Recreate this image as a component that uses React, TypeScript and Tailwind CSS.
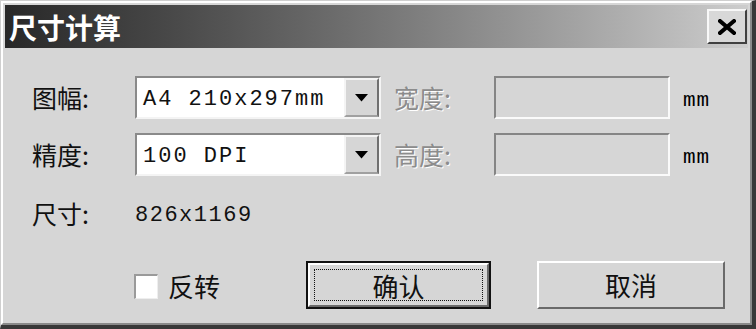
import React from "react";

const cjk = { fontFamily: '"Noto Sans CJK SC", "Noto Sans", sans-serif' };
const mono = { fontFamily: '"Liberation Mono", "DejaVu Sans Mono", monospace' };

function Combo({ value }: { value: string }) {
  return (
    <div className="w-[246px] h-[43px] flex border-t-2 border-l-2 border-t-[#8a8a8a] border-l-[#8a8a8a] border-r-2 border-b-2 border-r-[#f4f4f4] border-b-[#f4f4f4] bg-white">
      <div className="flex-1 flex items-center pl-[6px] pt-[4px] text-[22px] tracking-[2px] text-[#111]" style={mono}>
        {value}
      </div>
      <div className="w-[35px] h-full bg-[#d6d6d6] border-t-2 border-l-2 border-t-[#f4f4f4] border-l-[#f4f4f4] border-r-2 border-b-2 border-r-[#707070] border-b-[#a0a0a0] flex items-center justify-center">
        <svg width="13" height="8" viewBox="0 0 13 8">
          <polygon points="0,0 13,0 6.5,7.5" fill="#000" />
        </svg>
      </div>
    </div>
  );
}

function Field() {
  return (
    <div className="w-[176px] h-[43px] border-t-2 border-l-2 border-t-[#858585] border-l-[#858585] border-r-2 border-b-2 border-r-[#fafafa] border-b-[#fafafa] bg-[#d6d6d6]" />
  );
}

function DisabledLabel({ text }: { text: string }) {
  return (
    <div className="w-[102px] pl-[2px] text-[25px] text-[#8c8c8c] [text-shadow:1px_1px_0_#ffffff]" style={cjk}>
      {text}
    </div>
  );
}

export default function App() {
  return (
    <div className="w-[756px] h-[329px] border-t border-l border-t-[#cfcfcf] border-l-[#cfcfcf] border-r-4 border-b-4 border-r-[#383838] border-b-[#383838] overflow-hidden">
      <div className="w-full h-full border-t-2 border-l-2 border-t-white border-l-white border-r-2 border-b-2 border-r-[#8a8a8a] border-b-[#8a8a8a] bg-[#d6d6d6] pt-[2px] pl-[2px] pr-[2px] flex flex-col">
        {/* Title bar */}
        <div className="h-[43px] flex items-center justify-between bg-linear-to-r from-[#282828] to-[#cdcdcd] pl-[4px] pr-[1px]">
          <div className="text-[28px] font-bold text-white leading-none" style={cjk}>
            尺寸计算
          </div>
          <div className="w-[40px] h-[35px] bg-[#d8d8d8] border-t-2 border-l-2 border-t-[#f8f8f8] border-l-[#f8f8f8] border-r-2 border-b-2 border-r-[#404040] border-b-[#404040] flex items-center justify-center">
            <svg width="18" height="16" viewBox="0 0 18 16">
              <path d="M2 2 L16 14 M16 2 L2 14" stroke="#000" strokeWidth="4" strokeLinecap="square" />
            </svg>
          </div>
        </div>

        {/* Body */}
        <div className="flex flex-col pl-[27px] text-[#111]">
          <div className="mt-[28px] h-[43px] flex items-center">
            <div className="w-[103px] text-[25px]" style={cjk}>图幅:</div>
            <Combo value="A4 210x297mm" />
            <div className="ml-[11px]">
              <DisabledLabel text="宽度:" />
            </div>
            <Field />
            <div className="ml-[13px] pt-[6px] text-[21px] tracking-[1px] text-black" style={mono}>mm</div>
          </div>

          <div className="mt-[14px] h-[43px] flex items-center">
            <div className="w-[103px] text-[25px]" style={cjk}>精度:</div>
            <Combo value="100 DPI" />
            <div className="ml-[11px]">
              <DisabledLabel text="高度:" />
            </div>
            <Field />
            <div className="ml-[13px] pt-[6px] text-[21px] tracking-[1px] text-black" style={mono}>mm</div>
          </div>

          <div className="mt-[23px] h-[30px] flex items-center">
            <div className="w-[103px] text-[25px]" style={cjk}>尺寸:</div>
            <div className="pt-[2px] text-[22px] tracking-[1.5px]" style={mono}>826x1169</div>
          </div>

          <div className="mt-[31px] h-[49px] flex items-center">
            <div className="ml-[102px] mt-[4px] w-[24px] h-[25px] bg-white border-t-2 border-l-2 border-t-[#9a9a9a] border-l-[#9a9a9a] border-r border-b border-r-[#eeeeee] border-b-[#eeeeee]" />
            <div className="ml-[10px] mt-[2px] w-[57px] text-[26px]" style={cjk}>反转</div>
            <div className="ml-[81px] mt-[1px] w-[185px] h-[48px] border-2 border-[#111] bg-[#d6d6d6]">
              <div className="w-full h-full border-t-2 border-l-2 border-t-white border-l-white border-r-2 border-b-2 border-r-[#6a6a6a] border-b-[#6a6a6a] p-[4px]">
                <div className="w-full h-full border border-dotted border-[#111] flex items-center justify-center text-[26px]" style={cjk}>
                  确认
                </div>
              </div>
            </div>
            <div className="ml-[46px] w-[188px] h-[48px] bg-[#d6d6d6] border-t-2 border-l-2 border-t-white border-l-white border-r-2 border-b-2 border-r-[#6a6a6a] border-b-[#6a6a6a] flex items-center justify-center text-[26px]" style={cjk}>
              取消
            </div>
          </div>
        </div>
      </div>
    </div>
  );
}
